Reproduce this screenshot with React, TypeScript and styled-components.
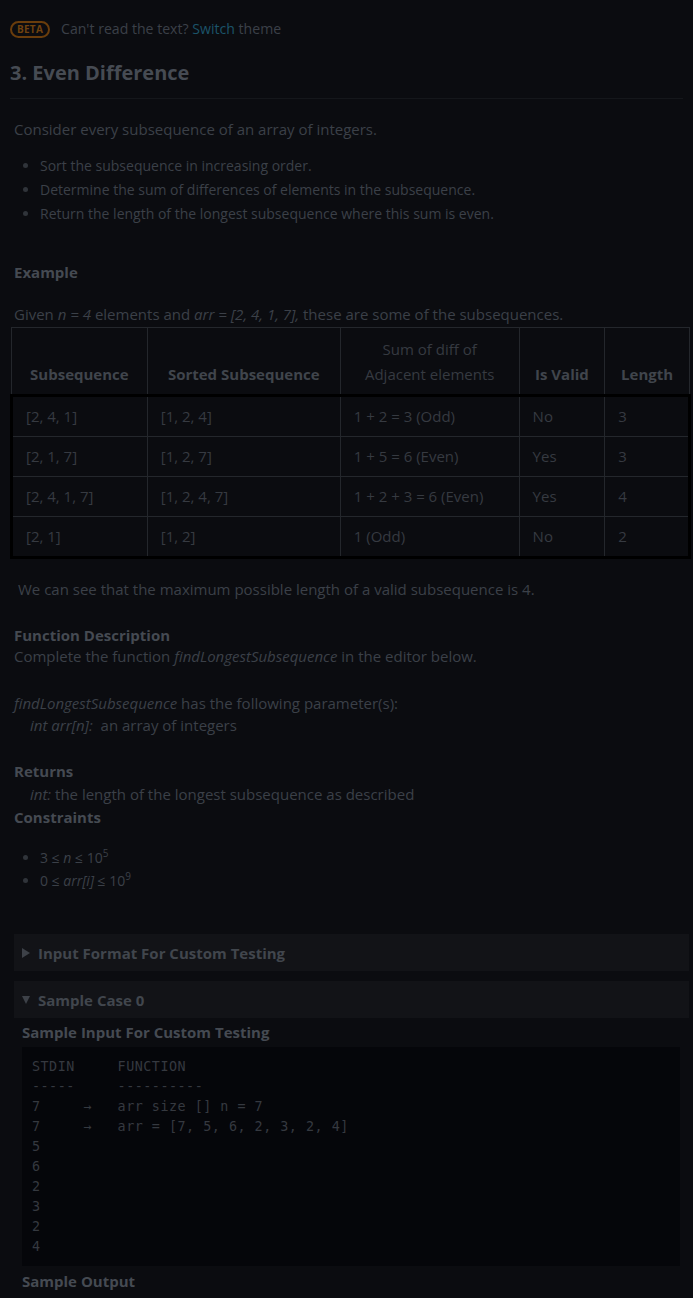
import React from "react";
import styled, { createGlobalStyle } from "styled-components";

const Global = createGlobalStyle`
  html, body { margin: 0; padding: 0; background: #0b0c10; }
  body { font-family: "Open Sans", "Noto Sans", sans-serif; color: #3b4048; }
`;

const Page = styled.div`
  background: #0b0c10;
  min-height: 1298px;
  padding-top: 20px;
  box-sizing: border-box;
`;

const Header = styled.header`
  padding: 0 10px;
`;

const TopBar = styled.div`
  display: flex;
  align-items: center;
  gap: 11px;
  height: 18px;
  font-size: 14.1px;
  line-height: 18px;
  color: #3b4048;
`;

const Badge = styled.span`
  display: inline-flex;
  align-items: center;
  justify-content: center;
  box-sizing: border-box;
  width: 40px;
  height: 17px;
  border: 2px solid #6a3d0c;
  border-radius: 9px;
  color: #70420f;
  font-size: 10px;
  font-weight: 700;
  letter-spacing: 0.3px;
`;

const Link = styled.a`
  color: #1b5369;
  text-decoration: none;
`;

const Title = styled.h1`
  margin: 21px 0 0;
  padding-bottom: 11px;
  border-bottom: 1px solid #15171b;
  font-size: 20px;
  line-height: 28px;
  font-weight: 700;
  color: #464b53;
`;

const Content = styled.main`
  padding: 0 4px 0 14px;
  font-size: 15px;
`;

const P = styled.p<{ $mt?: number; $lh?: number; $indent?: number }>`
  margin: ${(p) => p.$mt ?? 0}px 0 0;
  padding-left: ${(p) => p.$indent ?? 0}px;
  line-height: ${(p) => p.$lh ?? 23}px;
  font-size: 15px;
`;

const H = styled.h3<{ $mt?: number; $lh?: number }>`
  margin: ${(p) => p.$mt ?? 0}px 0 0;
  font-size: 15px;
  line-height: ${(p) => p.$lh ?? 23}px;
  font-weight: 700;
  color: #454a52;
`;

const List = styled.ul<{ $mt?: number; $lh?: number }>`
  margin: ${(p) => p.$mt ?? 0}px 0 0;
  padding-left: 26px;
  font-size: 14px;
  line-height: ${(p) => p.$lh ?? 24}px;
  li::marker { color: #30343a; }
`;

const Sup = styled.sup`
  font-size: 10px;
  line-height: 0;
`;

const Table = styled.table`
  margin: 1px 0 0 -4px;
  width: 681px;
  border-collapse: collapse;
  font-size: 15px;
  color: #363a41;
  th, td { border: 1px solid #24272c; }
  tbody { border: 3px solid #000; }
`;

const Th = styled.th<{ $bold?: boolean }>`
  height: 59px;
  vertical-align: bottom;
  padding: 0 6px 7px;
  text-align: center;
  font-weight: ${(p) => (p.$bold ? 700 : 400)};
  line-height: 25px;
  color: ${(p) => (p.$bold ? "#40454c" : "#363a41")};
`;

const Td = styled.td`
  height: 37px;
  padding: 0 13px 2px;
  text-align: left;
  font-weight: 400;
`;

const Accordion = styled.div<{ $mt?: number }>`
  margin-top: ${(p) => p.$mt ?? 0}px;
  height: 37px;
  display: flex;
  align-items: center;
  gap: 8px;
  padding-left: 8px;
  background: #121317;
  font-size: 15px;
  font-weight: 700;
  color: #41464d;
`;

const Caret = styled.svg`
  display: block;
  width: 8px;
  height: 10px;
  flex: none;
`;

const Section = styled.div`
  padding: 0 9px 0 8px;
`;

const Code = styled.pre`
  margin: 4px 0 0;
  padding: 10px 10px 9px;
  background: #05060a;
  font-family: "DejaVu Sans Mono", "Liberation Mono", monospace;
  font-size: 13.4px;
  letter-spacing: 0.5px;
  line-height: 20px;
  color: #353940;
`;

const rows = [
  ["[2, 4, 1]", "[1, 2, 4]", "1 + 2 = 3 (Odd)", "No", "3"],
  ["[2, 1, 7]", "[1, 2, 7]", "1 + 5 = 6 (Even)", "Yes", "3"],
  ["[2, 4, 1, 7]", "[1, 2, 4, 7]", "1 + 2 + 3 = 6 (Even)", "Yes", "4"],
  ["[2, 1]", "[1, 2]", "1 (Odd)", "No", "2"],
];

const code = `STDIN     FUNCTION
-----     ----------
7     →   arr size [] n = 7
7     →   arr = [7, 5, 6, 2, 3, 2, 4]
5
6
2
3
2
4`;

export default function App() {
  return (
    <>
      <Global />
      <Page>
        <Header>
          <TopBar>
            <Badge>BETA</Badge>
            <span>
              Can't read the text? <Link href="#">Switch</Link> theme
            </span>
          </TopBar>
          <Title>3. Even Difference</Title>
        </Header>
        <Content>
          <P $mt={18} $lh={24}>Consider every subsequence of an array of integers.</P>
          <List $mt={13}>
            <li>Sort the subsequence in increasing order.</li>
            <li>Determine the sum of differences of elements in the subsequence.</li>
            <li>Return the length of the longest subsequence where this sum is even.</li>
          </List>
          <H $mt={34} $lh={24}>Example</H>
          <P $mt={18} $lh={24}>
            Given <i>n = 4</i> elements and <i>arr = [2, 4, 1, 7],</i> these are some of the
            subsequences.
          </P>
          <Table>
            <colgroup>
              <col style={{ width: 136 }} />
              <col style={{ width: 194 }} />
              <col style={{ width: 180 }} />
              <col style={{ width: 86 }} />
              <col style={{ width: 85 }} />
            </colgroup>
            <thead>
              <tr>
                <Th $bold>Subsequence</Th>
                <Th $bold>Sorted Subsequence</Th>
                <Th>
                  Sum of diff of
                  <br />
                  Adjacent elements
                </Th>
                <Th $bold>Is Valid</Th>
                <Th $bold>Length</Th>
              </tr>
            </thead>
            <tbody>
              {rows.map((r, i) => (
                <tr key={i}>
                  {r.map((c, j) => (
                    <Td key={j}>{c}</Td>
                  ))}
                </tr>
              ))}
            </tbody>
          </Table>
          <P $mt={18} $lh={24} $indent={4}>
            We can see that the maximum possible length of a valid subsequence is 4.
          </P>
          <H $mt={23} $lh={22}>Function Description</H>
          <P $lh={21}>
            Complete the function <i>findLongestSubsequence</i> in the editor below.
          </P>
          <P $mt={25} $lh={22}>
            <i>findLongestSubsequence</i> has the following parameter(s):
          </P>
          <P $lh={22} $indent={16}>
            <i>int arr[n]:</i>&nbsp; an array of integers
          </P>
          <H $mt={24} $lh={23}>Returns</H>
          <P $lh={23} $indent={16}>
            <i>int:</i> the length of the longest subsequence as described
          </P>
          <H $lh={23}>Constraints</H>
          <List $mt={17} $lh={23}>
            <li>
              3 ≤ <i>n</i> ≤ 10<Sup>5</Sup>
            </li>
            <li>
              0 ≤ <i>arr[i]</i> ≤ 10<Sup>9</Sup>
            </li>
          </List>
          <Accordion $mt={42}>
            <Caret viewBox="0 0 8 10">
              <path d="M0 0 L8 5 L0 10 Z" fill="#3d4148" />
            </Caret>
            Input Format For Custom Testing
          </Accordion>
          <Accordion $mt={10}>
            <Caret viewBox="0 0 8 10">
              <path d="M0 1 L8 1 L4 9 Z" fill="#3d4148" />
            </Caret>
            Sample Case 0
          </Accordion>
          <Section>
            <H $mt={3} $lh={22}>Sample Input For Custom Testing</H>
            <Code>{code}</Code>
            <H $mt={4} $lh={22}>Sample Output</H>
          </Section>
        </Content>
      </Page>
    </>
  );
}
